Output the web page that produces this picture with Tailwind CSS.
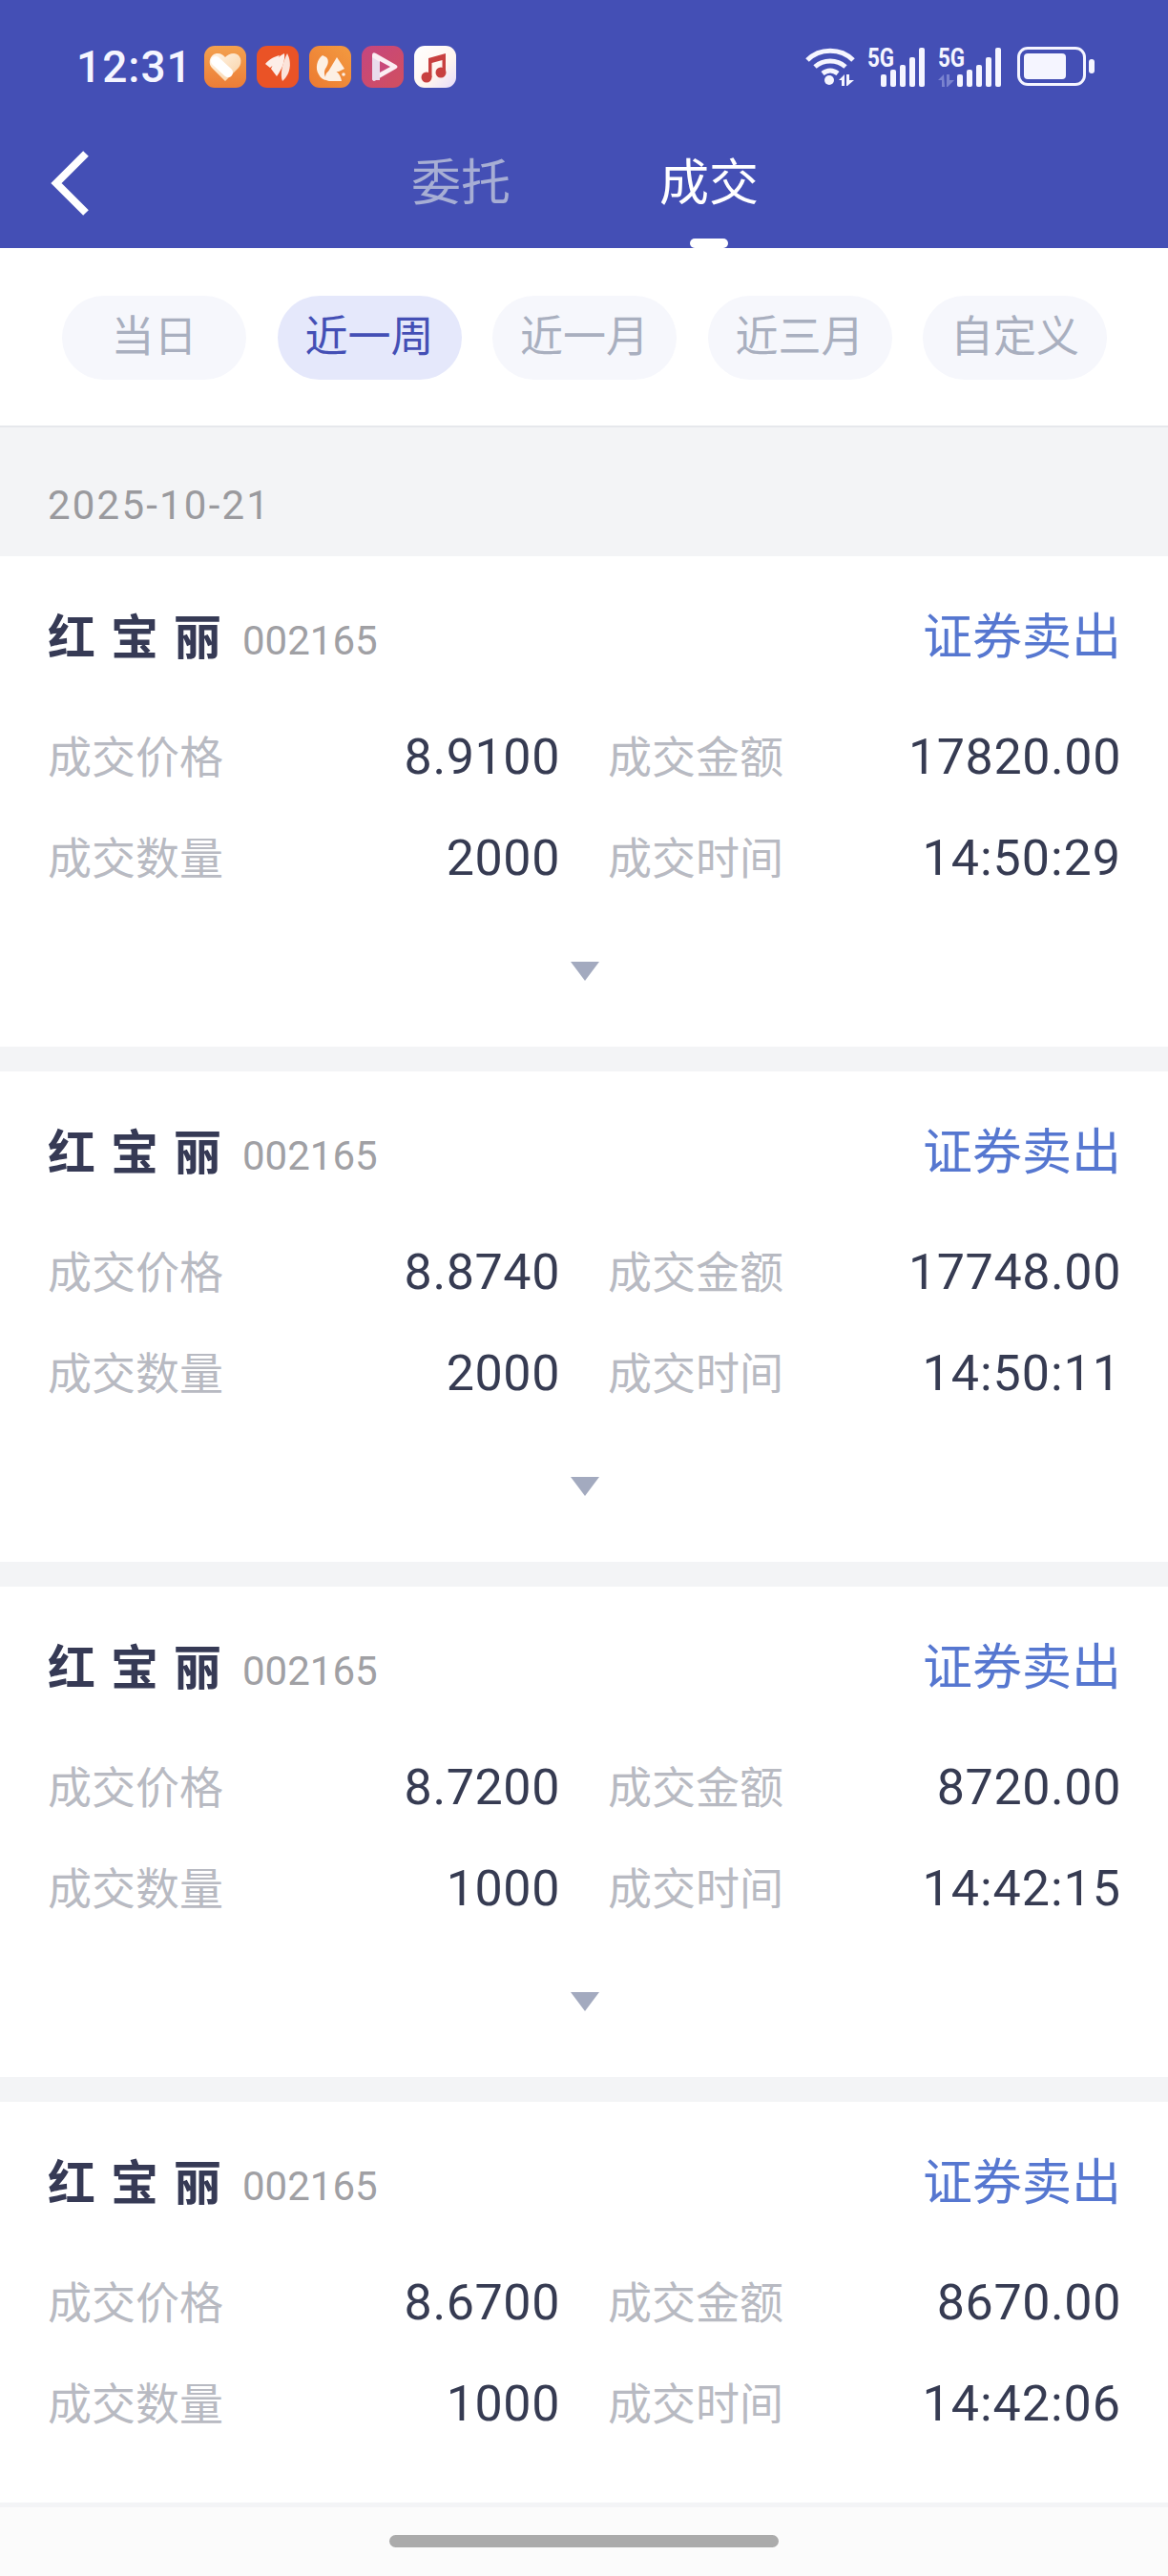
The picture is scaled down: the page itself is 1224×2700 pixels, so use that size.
<!DOCTYPE html>
<html lang="zh-CN">
<head>
    <meta charset="UTF-8">
    <meta name="viewport" content="width=device-width, initial-scale=1.0">
    <title>成交</title>
    <script src="https://cdn.jsdelivr.net/npm/@tailwindcss/browser@4"></script>
</head>
<body class="bg-[#f3f4f6] font-['Roboto','Noto_Sans_CJK_SC',sans-serif]">
<div class="w-[1224px] h-[2700px] flex flex-col overflow-hidden">

    <!-- header -->
    <header class="h-[260px] shrink-0 bg-[#444fb5]">
        <!-- status bar -->
        <div class="h-[140px] pl-[80px] pr-[77px] flex items-center">
            <span class="w-[134px] text-[46px] leading-none font-medium tracking-[1px] text-[#f5f5ff]">12:31</span>
            <div class="flex gap-[11px]">
                <svg width="44" height="44" viewBox="0 0 44 44"><defs><linearGradient id="a1" x1="0" y1="0" x2="0" y2="1"><stop offset="0" stop-color="#f3a14f"/><stop offset="1" stop-color="#ec7d37"/></linearGradient><linearGradient id="h1" x1="0" y1="0" x2="1" y2="1"><stop offset="0" stop-color="#fff6ea"/><stop offset="1" stop-color="#f9cfa0"/></linearGradient></defs><rect width="44" height="44" rx="11" fill="url(#a1)"/><path d="M22 37 L8 23 C3 17 7 8 14 8 C18 8 20 10 22 12 C24 10 27 8 31 8 C38 8 41 17 36 23 Z" fill="url(#h1)"/><path d="M12 16 L25 28" stroke="#ffffff" stroke-width="10" stroke-linecap="round"/></svg>
                <svg width="44" height="44" viewBox="0 0 44 44"><rect width="44" height="44" rx="11" fill="#ea5326"/><path d="M9 19 C13 14 19 11 24 10 C22 15 18 20 14 23 Z M15 24 C18 17 24 10 29 8 C30 15 27 24 21 32 Z" fill="#fdeee8"/><path d="M27 37 C24 30 27 18 32 8 C36 15 37 28 27 37 Z" fill="#fbe3da"/></svg>
                <svg width="44" height="44" viewBox="0 0 44 44"><defs><linearGradient id="a3" x1="0" y1="1" x2="1" y2="0"><stop offset="0" stop-color="#ec7a32"/><stop offset="1" stop-color="#f39a40"/></linearGradient></defs><rect width="44" height="44" rx="11" fill="url(#a3)"/><path d="M14 10 C8 14 6 24 10 30 C12 34 15 36 19 36 C16 32 15 28 17 24 C20 20 21 15 18 12 Z" fill="#fdf0e4"/><path d="M20 27 L29 12 L37 24 L31 27 Z" fill="#fdf0e4"/><path d="M17 33 C17 27 22 25 26 26 C30 27 33 31 34 37 L22 37 C19 37 17 36 17 33 Z" fill="#fdf0e4"/><circle cx="36" cy="30" r="1.8" fill="#fdf0e4"/></svg>
                <svg width="44" height="44" viewBox="0 0 44 44"><defs><linearGradient id="a4" x1="0" y1="0" x2="1" y2="1"><stop offset="0" stop-color="#c5467f"/><stop offset="1" stop-color="#d14f5f"/></linearGradient></defs><rect width="44" height="44" rx="11" fill="url(#a4)"/><path d="M15 8 L36 20 Q39 22 36 24 L15 36 Q11 38 11 34 L11 10 Q11 6 15 8 Z" fill="#fbeef3"/><path d="M11 12 L19 17 L19 36 L15 36 Q11 38 11 34 Z" fill="#e9dcec"/><path d="M19 16 L30 22 L19 28 Z" fill="#c9497a"/></svg>
                <svg width="44" height="44" viewBox="0 0 44 44"><defs><linearGradient id="a5" x1="0" y1="0" x2="1" y2="1"><stop offset="0" stop-color="#ffffff"/><stop offset="0.6" stop-color="#fff5ee"/><stop offset="1" stop-color="#e6dcfb"/></linearGradient></defs><rect width="44" height="44" rx="11" fill="url(#a5)"/><path d="M15 13 L33 8 L33 28 L29.5 28 L29.5 15 L18.5 18 L18.5 33 L15 33 Z" fill="#c8403f"/><circle cx="13" cy="33" r="5.5" fill="#c8403f"/><circle cx="28" cy="28" r="5.5" fill="#c8403f"/></svg>
            </div>
            <div class="ml-auto flex items-start h-[42px]">
                <!-- wifi -->
                <svg width="54" height="42" viewBox="0 0 54 42" class="mr-[12px]"><g fill="none" stroke="#f5f5ff" stroke-width="5"><path d="M3 14 C16 1 38 1 51 14"/><path d="M11 21 C20 13 34 13 43 21"/><path d="M19 28 C24 24 30 24 35 28"/></g><circle cx="26" cy="35" r="5" fill="#f5f5ff"/><path d="M36 35 L42 29 L42 41 L39 41 L39 35 Z M44 29 L47 29 L47 35 L52 35 L45 41 L44 41 Z" fill="#f5f5ff"/></svg>
                <!-- sim 1 -->
                <div class="relative w-[60px] h-[42px] mr-[14px]">
                    <span class="absolute left-0 top-[-2px] origin-left scale-x-80 text-[28px] leading-[28px] font-bold text-[#f5f5ff]">5G</span>
                    <div class="absolute right-0 bottom-0 flex items-end gap-[4px]">
                        <div class="w-[6px] h-[13px] rounded-[2px] bg-[#f5f5ff]"></div>
                        <div class="w-[6px] h-[18px] rounded-[2px] bg-[#f5f5ff]"></div>
                        <div class="w-[6px] h-[23px] rounded-[2px] bg-[#f5f5ff]"></div>
                        <div class="w-[6px] h-[31px] rounded-[2px] bg-[#f5f5ff]"></div>
                        <div class="w-[6px] h-[41px] rounded-[2px] bg-[#f5f5ff]"></div>
                    </div>
                </div>
                <!-- sim 2 -->
                <div class="relative w-[66px] h-[42px] mr-[17px]">
                    <span class="absolute left-0 top-[-2px] origin-left scale-x-80 text-[28px] leading-[28px] font-bold text-[#f5f5ff]">5G</span>
                    <svg width="17" height="13" viewBox="0 0 17 13" class="absolute left-0 bottom-0"><path d="M0 6 L6 0 L7 13 L4 13 L4 6 Z M9 0 L12 0 L12 6 L17 6 L10 13 L9 13 Z" fill="#7a83cf"/></svg>
                    <div class="absolute right-0 bottom-0 flex items-end gap-[4px]">
                        <div class="w-[6px] h-[13px] rounded-[2px] bg-[#f5f5ff]"></div>
                        <div class="w-[6px] h-[18px] rounded-[2px] bg-[#f5f5ff]"></div>
                        <div class="w-[6px] h-[23px] rounded-[2px] bg-[#f5f5ff]"></div>
                        <div class="w-[6px] h-[31px] rounded-[2px] bg-[#f5f5ff]"></div>
                        <div class="w-[6px] h-[41px] rounded-[2px] bg-[#f5f5ff]"></div>
                    </div>
                </div>
                <!-- battery -->
                <div class="flex items-center h-[41px] gap-[3px]">
                    <div class="w-[72px] h-[41px] rounded-[11px] border-[3px] border-[#f5f5ff] p-[4px]">
                        <div class="w-[44px] h-full rounded-[4px] bg-[#f5f5ff]"></div>
                    </div>
                    <div class="w-[6px] h-[15px] rounded-[3px] bg-[#f5f5ff]"></div>
                </div>
            </div>
        </div>
        <!-- nav -->
        <div class="flex items-start pl-[52px]">
            <svg width="44" height="70" viewBox="0 0 44 70" class="mt-[17px]"><path d="M38 4 L7 35 L38 66" fill="none" stroke="#ffffff" stroke-width="8"/></svg>
            <div class="ml-[335px] mt-[23px] flex gap-[156px] text-[52px] leading-[60px]">
                <span class="text-[#a7aed4]">委托</span>
                <span class="relative text-white">成交
                    <span class="absolute left-[32px] top-[87px] w-[40px] h-[10px] rounded-[5px] bg-white"></span>
                </span>
            </div>
        </div>
    </header>

    <!-- period filter -->
    <div class="h-[188px] shrink-0 bg-white border-b-[2px] border-[#e6e8ec] pl-[65px] pt-[50px] flex gap-[32.5px] text-[45px]">
        <div class="w-[193px] h-[88px] rounded-full bg-[#f6f7fc] text-[#a9afbf] flex items-center justify-center">当日</div>
        <div class="w-[193px] h-[88px] rounded-full bg-[#e5e8fb] text-[#444fb5] flex items-center justify-center">近一周</div>
        <div class="w-[193px] h-[88px] rounded-full bg-[#f6f7fc] text-[#a9afbf] flex items-center justify-center">近一月</div>
        <div class="w-[193px] h-[88px] rounded-full bg-[#f6f7fc] text-[#a9afbf] flex items-center justify-center">近三月</div>
        <div class="w-[193px] h-[88px] rounded-full bg-[#f6f7fc] text-[#a9afbf] flex items-center justify-center">自定义</div>
    </div>

    <main class="flex-1 overflow-hidden">
        <div class="h-[135px] pl-[50px] pt-[52px] text-[42px] leading-[60px] tracking-[2.2px] text-[#9a9a9e]">2025-10-21</div>

        <!-- trade 1 -->
        <section class="h-[514px] mb-[26px] bg-white pl-[50px] pr-[49px] pt-[56px]">
            <div class="h-[60px] flex items-center justify-between">
                <div class="flex items-center">
                    <span class="w-[204px] text-[50px] font-bold tracking-[16px] text-[#363a55]">红宝丽</span>
                    <span class="pt-[4px] text-[42px] text-[#a0a0a4]">002165</span>
                </div>
                <span class="text-[52px] text-[#5677d0]">证券卖出</span>
            </div>
            <div class="mt-[65px] flex h-[60px] items-center">
                <span class="text-[46px] text-[#b8bac2]">成交价格</span>
                <span class="w-[353px] text-right text-[52px] tracking-[0.6px] text-[#363b52]">8.9100</span>
                <span class="ml-[50px] text-[46px] text-[#b8bac2]">成交金额</span>
                <span class="flex-1 text-right text-[52px] tracking-[0.6px] text-[#363b52]">17820.00</span>
            </div>
            <div class="mt-[46px] flex h-[60px] items-center">
                <span class="text-[46px] text-[#b8bac2]">成交数量</span>
                <span class="w-[353px] text-right text-[52px] tracking-[0.6px] text-[#363b52]">2000</span>
                <span class="ml-[50px] text-[46px] text-[#b8bac2]">成交时间</span>
                <span class="flex-1 text-right text-[52px] tracking-[1px] text-[#363b52]">14:50:29</span>
            </div>
            <svg width="32" height="20" viewBox="0 0 32 20" class="mt-[78px] mx-auto"><path d="M1 0 H31 L16 20 Z" fill="#a3aabf"/></svg>
        </section>

        <!-- trade 2 -->
        <section class="h-[514px] mb-[26px] bg-white pl-[50px] pr-[49px] pt-[56px]">
            <div class="h-[60px] flex items-center justify-between">
                <div class="flex items-center">
                    <span class="w-[204px] text-[50px] font-bold tracking-[16px] text-[#363a55]">红宝丽</span>
                    <span class="pt-[4px] text-[42px] text-[#a0a0a4]">002165</span>
                </div>
                <span class="text-[52px] text-[#5677d0]">证券卖出</span>
            </div>
            <div class="mt-[65px] flex h-[60px] items-center">
                <span class="text-[46px] text-[#b8bac2]">成交价格</span>
                <span class="w-[353px] text-right text-[52px] tracking-[0.6px] text-[#363b52]">8.8740</span>
                <span class="ml-[50px] text-[46px] text-[#b8bac2]">成交金额</span>
                <span class="flex-1 text-right text-[52px] tracking-[0.6px] text-[#363b52]">17748.00</span>
            </div>
            <div class="mt-[46px] flex h-[60px] items-center">
                <span class="text-[46px] text-[#b8bac2]">成交数量</span>
                <span class="w-[353px] text-right text-[52px] tracking-[0.6px] text-[#363b52]">2000</span>
                <span class="ml-[50px] text-[46px] text-[#b8bac2]">成交时间</span>
                <span class="flex-1 text-right text-[52px] tracking-[1px] text-[#363b52]">14:50:11</span>
            </div>
            <svg width="32" height="20" viewBox="0 0 32 20" class="mt-[78px] mx-auto"><path d="M1 0 H31 L16 20 Z" fill="#a3aabf"/></svg>
        </section>

        <!-- trade 3 -->
        <section class="h-[514px] mb-[26px] bg-white pl-[50px] pr-[49px] pt-[56px]">
            <div class="h-[60px] flex items-center justify-between">
                <div class="flex items-center">
                    <span class="w-[204px] text-[50px] font-bold tracking-[16px] text-[#363a55]">红宝丽</span>
                    <span class="pt-[4px] text-[42px] text-[#a0a0a4]">002165</span>
                </div>
                <span class="text-[52px] text-[#5677d0]">证券卖出</span>
            </div>
            <div class="mt-[65px] flex h-[60px] items-center">
                <span class="text-[46px] text-[#b8bac2]">成交价格</span>
                <span class="w-[353px] text-right text-[52px] tracking-[0.6px] text-[#363b52]">8.7200</span>
                <span class="ml-[50px] text-[46px] text-[#b8bac2]">成交金额</span>
                <span class="flex-1 text-right text-[52px] tracking-[0.6px] text-[#363b52]">8720.00</span>
            </div>
            <div class="mt-[46px] flex h-[60px] items-center">
                <span class="text-[46px] text-[#b8bac2]">成交数量</span>
                <span class="w-[353px] text-right text-[52px] tracking-[0.6px] text-[#363b52]">1000</span>
                <span class="ml-[50px] text-[46px] text-[#b8bac2]">成交时间</span>
                <span class="flex-1 text-right text-[52px] tracking-[1px] text-[#363b52]">14:42:15</span>
            </div>
            <svg width="32" height="20" viewBox="0 0 32 20" class="mt-[78px] mx-auto"><path d="M1 0 H31 L16 20 Z" fill="#a3aabf"/></svg>
        </section>

        <!-- trade 4 -->
        <section class="h-[514px] bg-white pl-[50px] pr-[49px] pt-[56px]">
            <div class="h-[60px] flex items-center justify-between">
                <div class="flex items-center">
                    <span class="w-[204px] text-[50px] font-bold tracking-[16px] text-[#363a55]">红宝丽</span>
                    <span class="pt-[4px] text-[42px] text-[#a0a0a4]">002165</span>
                </div>
                <span class="text-[52px] text-[#5677d0]">证券卖出</span>
            </div>
            <div class="mt-[65px] flex h-[60px] items-center">
                <span class="text-[46px] text-[#b8bac2]">成交价格</span>
                <span class="w-[353px] text-right text-[52px] tracking-[0.6px] text-[#363b52]">8.6700</span>
                <span class="ml-[50px] text-[46px] text-[#b8bac2]">成交金额</span>
                <span class="flex-1 text-right text-[52px] tracking-[0.6px] text-[#363b52]">8670.00</span>
            </div>
            <div class="mt-[46px] flex h-[60px] items-center">
                <span class="text-[46px] text-[#b8bac2]">成交数量</span>
                <span class="w-[353px] text-right text-[52px] tracking-[0.6px] text-[#363b52]">1000</span>
                <span class="ml-[50px] text-[46px] text-[#b8bac2]">成交时间</span>
                <span class="flex-1 text-right text-[52px] tracking-[1px] text-[#363b52]">14:42:06</span>
            </div>
        </section>
    </main>

    <!-- gesture bar -->
    <div class="h-[77px] shrink-0 bg-[#fbfbfb] border-t-[5px] border-[#f3f4f6] flex justify-center pt-[29px]">
        <div class="w-[408px] h-[13px] rounded-full bg-[#ababab]"></div>
    </div>
</div>
</body>
</html>
